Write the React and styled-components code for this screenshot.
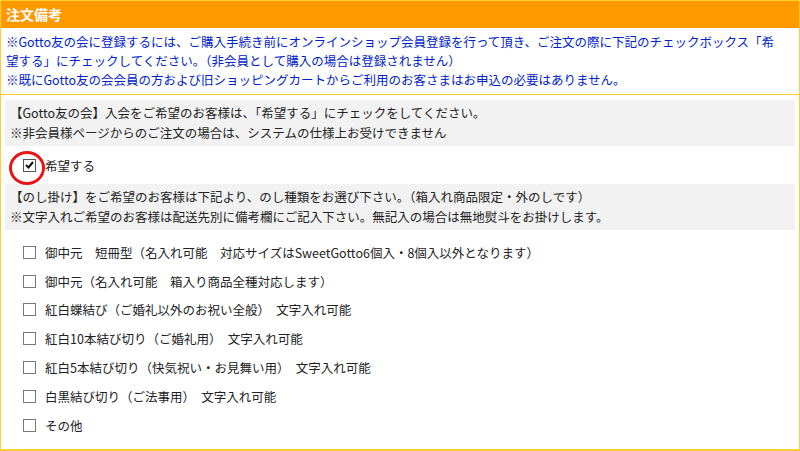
import styled, { createGlobalStyle } from 'styled-components';

const GlobalStyle = createGlobalStyle`
  html, body {
    margin: 0;
    padding: 0;
    background: #fff;
  }
  body {
    font-family: "Noto Sans CJK JP", "Liberation Sans", sans-serif;
    font-size: 12.5px;
    color: #222;
  }
`;

const options = [
  '御中元　短冊型（名入れ可能　対応サイズはSweetGotto6個入・8個入以外となります）',
  '御中元（名入れ可能　箱入り商品全種対応します）',
  '紅白蝶結び（ご婚礼以外のお祝い全般）　文字入れ可能',
  '紅白10本結び切り（ご婚礼用）　文字入れ可能',
  '紅白5本結び切り（快気祝い・お見舞い用）　文字入れ可能',
  '白黒結び切り（ご法事用）　文字入れ可能',
  'その他',
];

function App() {
  return (
    <>
      <GlobalStyle />
      <Panel>
        <Header>注文備考</Header>
        <Notice>
          ※Gotto友の会に登録するには、ご購入手続き前にオンラインショップ会員登録を行って頂き、ご注文の際に下記のチェックボックス「希<br />
          望する」にチェックしてください。（非会員として購入の場合は登録されません）<br />
          ※既にGotto友の会会員の方および旧ショッピングカートからご利用のお客さまはお申込の必要はありません。
        </Notice>
        <Body>
          <InfoBox>
            【Gotto友の会】入会をご希望のお客様は、「希望する」にチェックをしてください。<br />
            ※非会員様ページからのご注文の場合は、システムの仕様上お受けできません
          </InfoBox>
          <MemberRow>
            <CheckWrap>
              <Box checked>
                <svg width="9" height="8" viewBox="0 0 9 8">
                  <path d="M1 4 L3.5 6.5 L8 1" fill="none" stroke="#111" strokeWidth="2" />
                </svg>
              </Box>
              <Ring />
            </CheckWrap>
            <span>希望する</span>
          </MemberRow>
          <InfoBox>
            【のし掛け】をご希望のお客様は下記より、のし種類をお選び下さい。（箱入れ商品限定・外のしです）<br />
            ※文字入れご希望のお客様は配送先別に備考欄にご記入下さい。無記入の場合は無地熨斗をお掛けします。
          </InfoBox>
          <OptionList>
            {options.map((label) => (
              <Option key={label}>
                <Box />
                <span>{label}</span>
              </Option>
            ))}
          </OptionList>
        </Body>
      </Panel>
    </>
  );
}

const Panel = styled.div`
  width: 800px;
  height: 451px;
  box-sizing: border-box;
  border: 1px solid #ffcc33;
  border-bottom-width: 2px;
  display: flex;
  flex-direction: column;
`;

const Header = styled.div`
  height: 27px;
  background: #ff9900;
  color: #fff;
  font-weight: bold;
  font-size: 14px;
  line-height: 27px;
  padding-left: 5px;
`;

const Notice = styled.div`
  color: #0022cc;
  line-height: 19px;
  padding: 4px 5px 5px;
  white-space: nowrap;
  border-bottom: 1px solid #ffcc33;
`;

const Body = styled.div`
  padding: 5px 4px 0;
  display: flex;
  flex-direction: column;
`;

const InfoBox = styled.div`
  background: #f2f2f2;
  padding: 3px 5px 4px;
  line-height: 19.5px;
  white-space: nowrap;
`;

const MemberRow = styled.div`
  height: 38px;
  display: flex;
  align-items: center;
  gap: 9px;
  padding-left: 18px;
`;

const CheckWrap = styled.div`
  position: relative;
  display: flex;
`;

const Box = styled.span`
  width: 11px;
  height: 11px;
  border: 1px solid ${(p) => (p.checked ? '#555' : '#777')};
  background: #fff;
  display: inline-flex;
  align-items: center;
  justify-content: center;
  flex-shrink: 0;
`;

const Ring = styled.span`
  position: absolute;
  left: -14px;
  top: -8px;
  width: 30px;
  height: 28px;
  border: 3px solid #ee1111;
  border-radius: 50%;
`;

const OptionList = styled.div`
  padding: 8px 0 0 18px;
  display: flex;
  flex-direction: column;
`;

const Option = styled.div`
  height: 28.8px;
  display: flex;
  align-items: center;
  gap: 9px;
  color: #222;
`;

export default App;
